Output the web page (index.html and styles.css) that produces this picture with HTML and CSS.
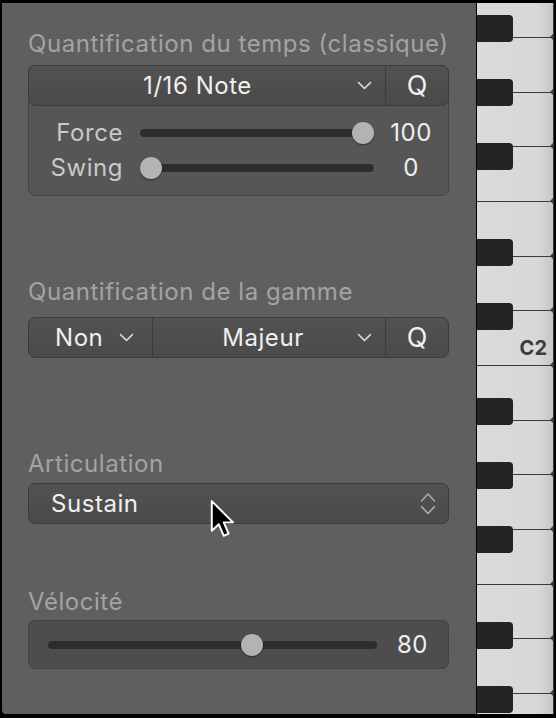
FILE: index.html
```html
<!DOCTYPE html>
<html lang="fr">
<head>
<meta charset="utf-8">
<title>Quantification</title>
<link rel="stylesheet" href="styles.css">
</head>
<body>
<div class="frame">
  <div class="panel">
    <section class="sec sec-time">
      <div class="title">Quantification du temps (classique)</div>
      <div class="box">
        <div class="dd-row">
          <div class="dd dd-note">
            <span class="dd-text">1/16 Note</span>
            <svg class="chev" width="15" height="9" viewBox="0 0 15 9"><polyline points="1.5,1.5 7.5,7.5 13.5,1.5"/></svg>
          </div>
          <div class="qbtn">Q</div>
        </div>
        <div class="sliders">
          <div class="srow">
            <span class="slabel">Force</span>
            <div class="track"><span class="thumb" style="left: calc((100% - 22px) * 1)"></span></div>
            <span class="sval">100</span>
          </div>
          <div class="srow">
            <span class="slabel">Swing</span>
            <div class="track"><span class="thumb" style="left: calc((100% - 22px) * 0)"></span></div>
            <span class="sval">0</span>
          </div>
        </div>
      </div>
    </section>

    <section class="sec sec-scale">
      <div class="title">Quantification de la gamme</div>
      <div class="dd-row">
        <div class="dd dd-non">
          <span class="dd-text">Non</span>
          <svg class="chev" width="15" height="9" viewBox="0 0 15 9"><polyline points="1.5,1.5 7.5,7.5 13.5,1.5"/></svg>
        </div>
        <div class="dd dd-major">
          <span class="dd-text">Majeur</span>
          <svg class="chev" width="15" height="9" viewBox="0 0 15 9"><polyline points="1.5,1.5 7.5,7.5 13.5,1.5"/></svg>
        </div>
        <div class="qbtn">Q</div>
      </div>
    </section>

    <section class="sec sec-art">
      <div class="title">Articulation</div>
      <div class="dd-row dd-art">
        <span class="dd-text left">Sustain</span>
        <svg class="updown" width="16" height="26" viewBox="0 0 16 26"><polyline points="1.5,10 8,3 14.5,10"/><polyline points="1.5,15.5 8,22.5 14.5,15.5"/></svg>
        <svg class="cursor" width="25" height="40" viewBox="0 0 14 22"><path d="M1 1 L1 17.6 L4.9 13.9 L7.7 20.4 L10.4 19.2 L7.7 12.9 L12.9 12.9 Z"/></svg>
      </div>
    </section>

    <section class="sec sec-vel">
      <div class="title">Vélocité</div>
      <div class="vbox">
        <div class="track"><span class="thumb" style="left: calc((100% - 22px) * 0.63)"></span></div>
        <span class="sval">80</span>
      </div>
    </section>
  </div>

  <div class="piano">
    <div class="keys">
      <div class="wk first"></div>
      <div class="wk"></div>
      <div class="wk"></div>
      <div class="wk"></div>
      <div class="wk"></div>
      <div class="wk"></div>
      <div class="wk"><span class="note">C2</span></div>
      <div class="wk"></div>
      <div class="wk"></div>
      <div class="wk"></div>
      <div class="wk"></div>
      <div class="wk"></div>
      <div class="wk"></div>
      <div class="wk"></div>
    </div>
    <div class="blacks">
      <div class="bk top"></div>
      <div class="bk"></div>
      <div class="bk"></div>
      <div class="bk wide"></div>
      <div class="bk"></div>
      <div class="bk wide"></div>
      <div class="bk"></div>
      <div class="bk"></div>
      <div class="bk wide"></div>
      <div class="bk"></div>
    </div>
  </div>
</div>
</body>
</html>
```

FILE: styles.css
```css
* { box-sizing: border-box; }

html, body {
  margin: 0;
  background: #000;
}

body {
  width: 556px;
  height: 718px;
  overflow: hidden;
  font-family: Inter, "Noto Sans", "Liberation Sans", sans-serif;
}

.frame {
  display: flex;
  gap: 1px;
  height: 718px;
  padding: 3px 0 4px 2px;
}

/* ---------- left panel ---------- */
.panel {
  width: 474px;
  flex-shrink: 0;
  background: #5f5f5f;
  border-radius: 0 0 0 4px;
  padding: 27px 27px 0 26px;
  display: flex;
  flex-direction: column;
  letter-spacing: 0.55px;
}

.title {
  font-size: 24px;
  line-height: 28px;
  color: #a3a3a3;
  white-space: nowrap;
}

.sec-time .title { margin-bottom: 7px; }
.sec-scale { margin-top: 82px; }
.sec-scale .title { margin-bottom: 11px; }
.sec-art { margin-top: 92px; }
.sec-art .title { margin-bottom: 5px; }
.sec-vel { margin-top: 64px; }
.sec-vel .title { margin-bottom: 4px; }

.box {
  background: #565656;
  border: 1px solid #444;
  border-radius: 7px;
}

.box > .dd-row {
  margin: -1px -1px 0 -1px;
}

.dd-row {
  display: flex;
  height: 41px;
  background: linear-gradient(#525252, #4a4a4a);
  border: 1px solid #3c3c3c;
  border-radius: 7px;
  color: #efefef;
  font-size: 24px;
  line-height: 28px;
}

.dd {
  display: flex;
  align-items: center;
}

.dd-text {
  flex: 1;
  text-align: center;
  white-space: nowrap;
}

.chev {
  flex-shrink: 0;
}

.chev polyline,
.updown polyline {
  fill: none;
  stroke: #dedede;
  stroke-width: 1.6;
  stroke-linecap: round;
  stroke-linejoin: round;
}

.updown polyline {
  stroke: #a9a9a9;
}

.dd-note {
  flex: 1;
  padding: 0 13px 0 9px;
}

.qbtn {
  width: 63px;
  flex-shrink: 0;
  border-left: 1px solid #3c3c3c;
  display: flex;
  align-items: center;
  justify-content: center;
  font-size: 27px;
  letter-spacing: 0;
}

.dd-non {
  width: 123px;
  flex-shrink: 0;
  padding: 0 15px 0 26px;
}

.dd-non .dd-text {
  flex: 0 0 auto;
  margin-right: 16px;
}

.dd-major {
  flex: 1;
  border-left: 1px solid #3c3c3c;
  padding: 0 13px 0 16px;
}

.dd-art {
  position: relative;
  align-items: center;
  padding: 0 12px 0 22px;
}

.dd-text.left {
  text-align: left;
}

.cursor {
  position: absolute;
  left: 181px;
  top: 15px;
}

.cursor path {
  fill: #000;
  stroke: #fff;
  stroke-width: 1.1;
  stroke-linejoin: round;
}

/* sliders */
.sliders {
  padding: 9px 0 10px;
}

.srow {
  display: grid;
  grid-template-columns: 111px 1fr 74px;
  align-items: center;
  height: 35px;
  font-size: 24px;
  line-height: 28px;
}

.slabel {
  text-align: right;
  padding-right: 17px;
  color: #c9c9c9;
}

.sval {
  text-align: center;
  color: #efefef;
}

.track {
  position: relative;
  height: 8px;
  border-radius: 4px;
  background: #2d2d2d;
}

.thumb {
  position: absolute;
  top: 50%;
  width: 22px;
  height: 22px;
  margin-top: -11px;
  border-radius: 50%;
  background: #b3b3b3;
  box-shadow: 0 1px 1.5px rgba(0, 0, 0, 0.45);
}

.vbox {
  display: grid;
  grid-template-columns: 1fr 71px;
  align-items: center;
  height: 49px;
  padding-left: 19px;
  background: #4d4d4d;
  border: 1px solid #414141;
  border-radius: 7px;
  font-size: 24px;
  line-height: 28px;
}

/* ---------- piano ---------- */
.piano {
  position: relative;
  width: 79px;
  flex-shrink: 0;
  overflow: hidden;
  padding-right: 2px;
}

.keys {
  display: flex;
  flex-direction: column;
  border-right: 1px solid #3a3a3a;
  height: 100%;
  overflow: hidden;
}

.wk {
  position: relative;
  flex: 0 0 54.67px;
  border-top: 1px solid #3b3b3b;
  background: linear-gradient(to right, #dadada 0%, #d8d8d8 80%, #c6c6c6 100%);
  display: flex;
  align-items: flex-end;
  justify-content: flex-end;
  padding: 0 6px 7px 0;
}

.wk::before {
  content: "";
  position: absolute;
  right: 0;
  top: -4px;
  border: 3px solid transparent;
  border-right-color: #3b3b3b;
}

.wk.first {
  margin-top: -20.67px;
}

.note {
  font-size: 20px;
  line-height: 20px;
  font-weight: 700;
  color: #3c3c3c;
}

.blacks {
  position: absolute;
  inset: 0;
  display: flex;
  flex-direction: column;
  pointer-events: none;
}

.bk {
  flex: 0 0 27px;
  width: 36px;
  margin-top: 37px;
  background: #232323;
  border-radius: 0 4px 4px 0;
}

.bk.top { margin-top: 12px; }
.bk.wide { margin-top: 68.5px; }
```
